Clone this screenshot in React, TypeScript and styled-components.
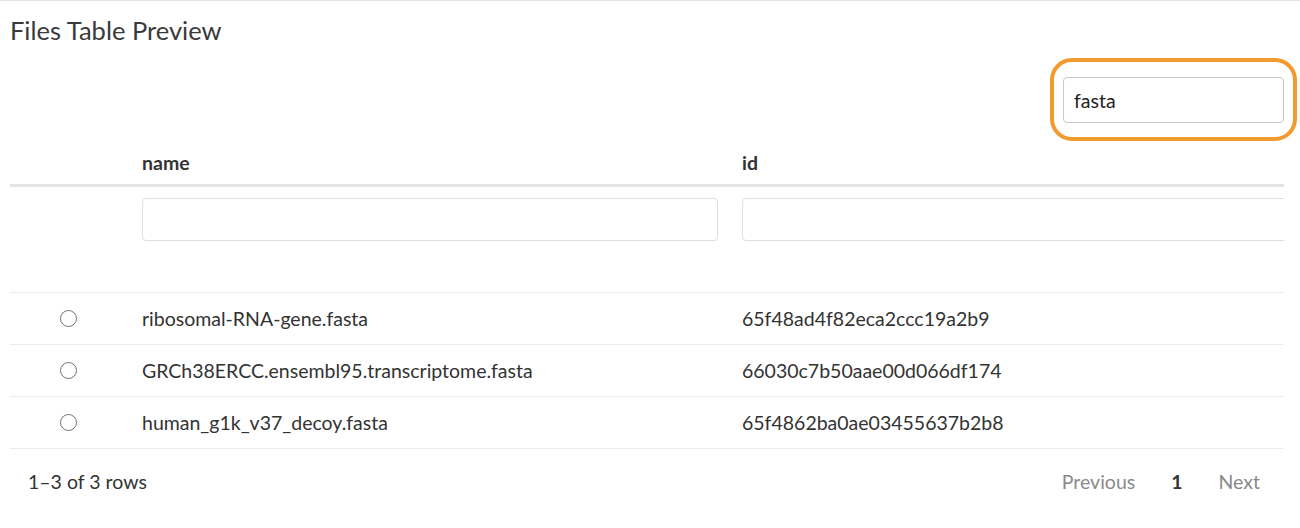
import styled, { createGlobalStyle } from "styled-components";

const GlobalStyle = createGlobalStyle`
  body {
    margin: 0;
    background: #ffffff;
    font-family: Lato, "Noto Sans", sans-serif;
    color: #333333;
  }
`;

const Page = styled.div`
  width: 1300px;
  height: 528px;
  border-top: 1px solid #e2e2e2;
  box-sizing: border-box;
  padding: 0 16px 0 10px;
  overflow: hidden;
`;

const Title = styled.h2`
  margin: 0;
  padding-top: 14px;
  height: 43px;
  font-size: 25.5px;
  font-weight: 400;
  line-height: 30px;
  color: #3a3a3a;
`;

const SearchBar = styled.div`
  display: flex;
  justify-content: flex-end;
  margin-right: -13px;
`;

const Highlight = styled.div`
  border: 4px solid #f29a2e;
  border-radius: 22px;
  padding: 15px 9px 14px 9px;
`;

const SearchInput = styled.div`
  width: 221px;
  height: 46px;
  box-sizing: border-box;
  border: 1px solid #c8c8c8;
  border-radius: 4px;
  padding: 0 10px;
  display: flex;
  align-items: center;
  font-size: 19.5px;
  color: #222;
`;

const TableWrap = styled.div`
  width: 1274px;
  overflow: hidden;
`;

const Row = styled.div<{ $height: number; $border?: string }>`
  display: grid;
  grid-template-columns: 120px 600px 1fr;
  height: ${(p) => p.$height}px;
  box-sizing: border-box;
  align-items: center;
  border-bottom: ${(p) => p.$border ?? "none"};
`;

const HeadCell = styled.div`
  padding-left: 12px;
  font-size: 19.5px;
  font-weight: 700;
  color: #333;
`;

const FilterCell = styled.div<{ $bleed?: boolean }>`
  padding: 0 ${(p) => (p.$bleed ? "0" : "12px")} 0 12px;
  align-self: start;
  padding-top: 11px;
`;

const FilterInput = styled.div<{ $bleed?: boolean }>`
  height: 43px;
  box-sizing: border-box;
  border: 1px solid #dedede;
  border-radius: 4px;
  width: ${(p) => (p.$bleed ? "calc(100% + 20px)" : "100%")};
`;

const Cell = styled.div`
  padding-left: 12px;
  font-size: 19.5px;
  color: #333;
`;

const RadioCell = styled.div`
  display: flex;
  justify-content: center;
  padding-right: 4px;
`;

const Radio = styled.span`
  width: 17px;
  height: 17px;
  border: 1.3px solid #707070;
  border-radius: 50%;
  box-sizing: border-box;
`;

const Footer = styled.div`
  display: flex;
  justify-content: space-between;
  align-items: center;
  height: 64px;
  padding-left: 18px;
  font-size: 19.5px;
`;

const Pager = styled.div`
  display: flex;
  align-items: center;
  gap: 36px;
  padding-right: 24px;
`;

const PageLink = styled.span<{ $active?: boolean }>`
  color: ${(p) => (p.$active ? "#333" : "#8a8a8a")};
  font-weight: ${(p) => (p.$active ? 700 : 400)};
`;

const rows = [
  { name: "ribosomal-RNA-gene.fasta", id: "65f48ad4f82eca2ccc19a2b9" },
  {
    name: "GRCh38ERCC.ensembl95.transcriptome.fasta",
    id: "66030c7b50aae00d066df174",
  },
  { name: "human_g1k_v37_decoy.fasta", id: "65f4862ba0ae03455637b2b8" },
];

export default function App() {
  return (
    <>
      <GlobalStyle />
      <Page>
        <Title>Files Table Preview</Title>
        <SearchBar>
          <Highlight>
            <SearchInput>fasta</SearchInput>
          </Highlight>
        </SearchBar>
        <TableWrap>
          <Row $height={46} $border="3px solid #e4e4e4">
            <div />
            <HeadCell>name</HeadCell>
            <HeadCell>id</HeadCell>
          </Row>
          <Row $height={106} $border="1px solid #ececec">
            <div />
            <FilterCell>
              <FilterInput />
            </FilterCell>
            <FilterCell $bleed>
              <FilterInput $bleed />
            </FilterCell>
          </Row>
          {rows.map((r) => (
            <Row key={r.id} $height={52} $border="1px solid #ececec">
              <RadioCell>
                <Radio />
              </RadioCell>
              <Cell>{r.name}</Cell>
              <Cell>{r.id}</Cell>
            </Row>
          ))}
        </TableWrap>
        <Footer>
          <span>1–3 of 3 rows</span>
          <Pager>
            <PageLink>Previous</PageLink>
            <PageLink $active>1</PageLink>
            <PageLink>Next</PageLink>
          </Pager>
        </Footer>
      </Page>
    </>
  );
}
